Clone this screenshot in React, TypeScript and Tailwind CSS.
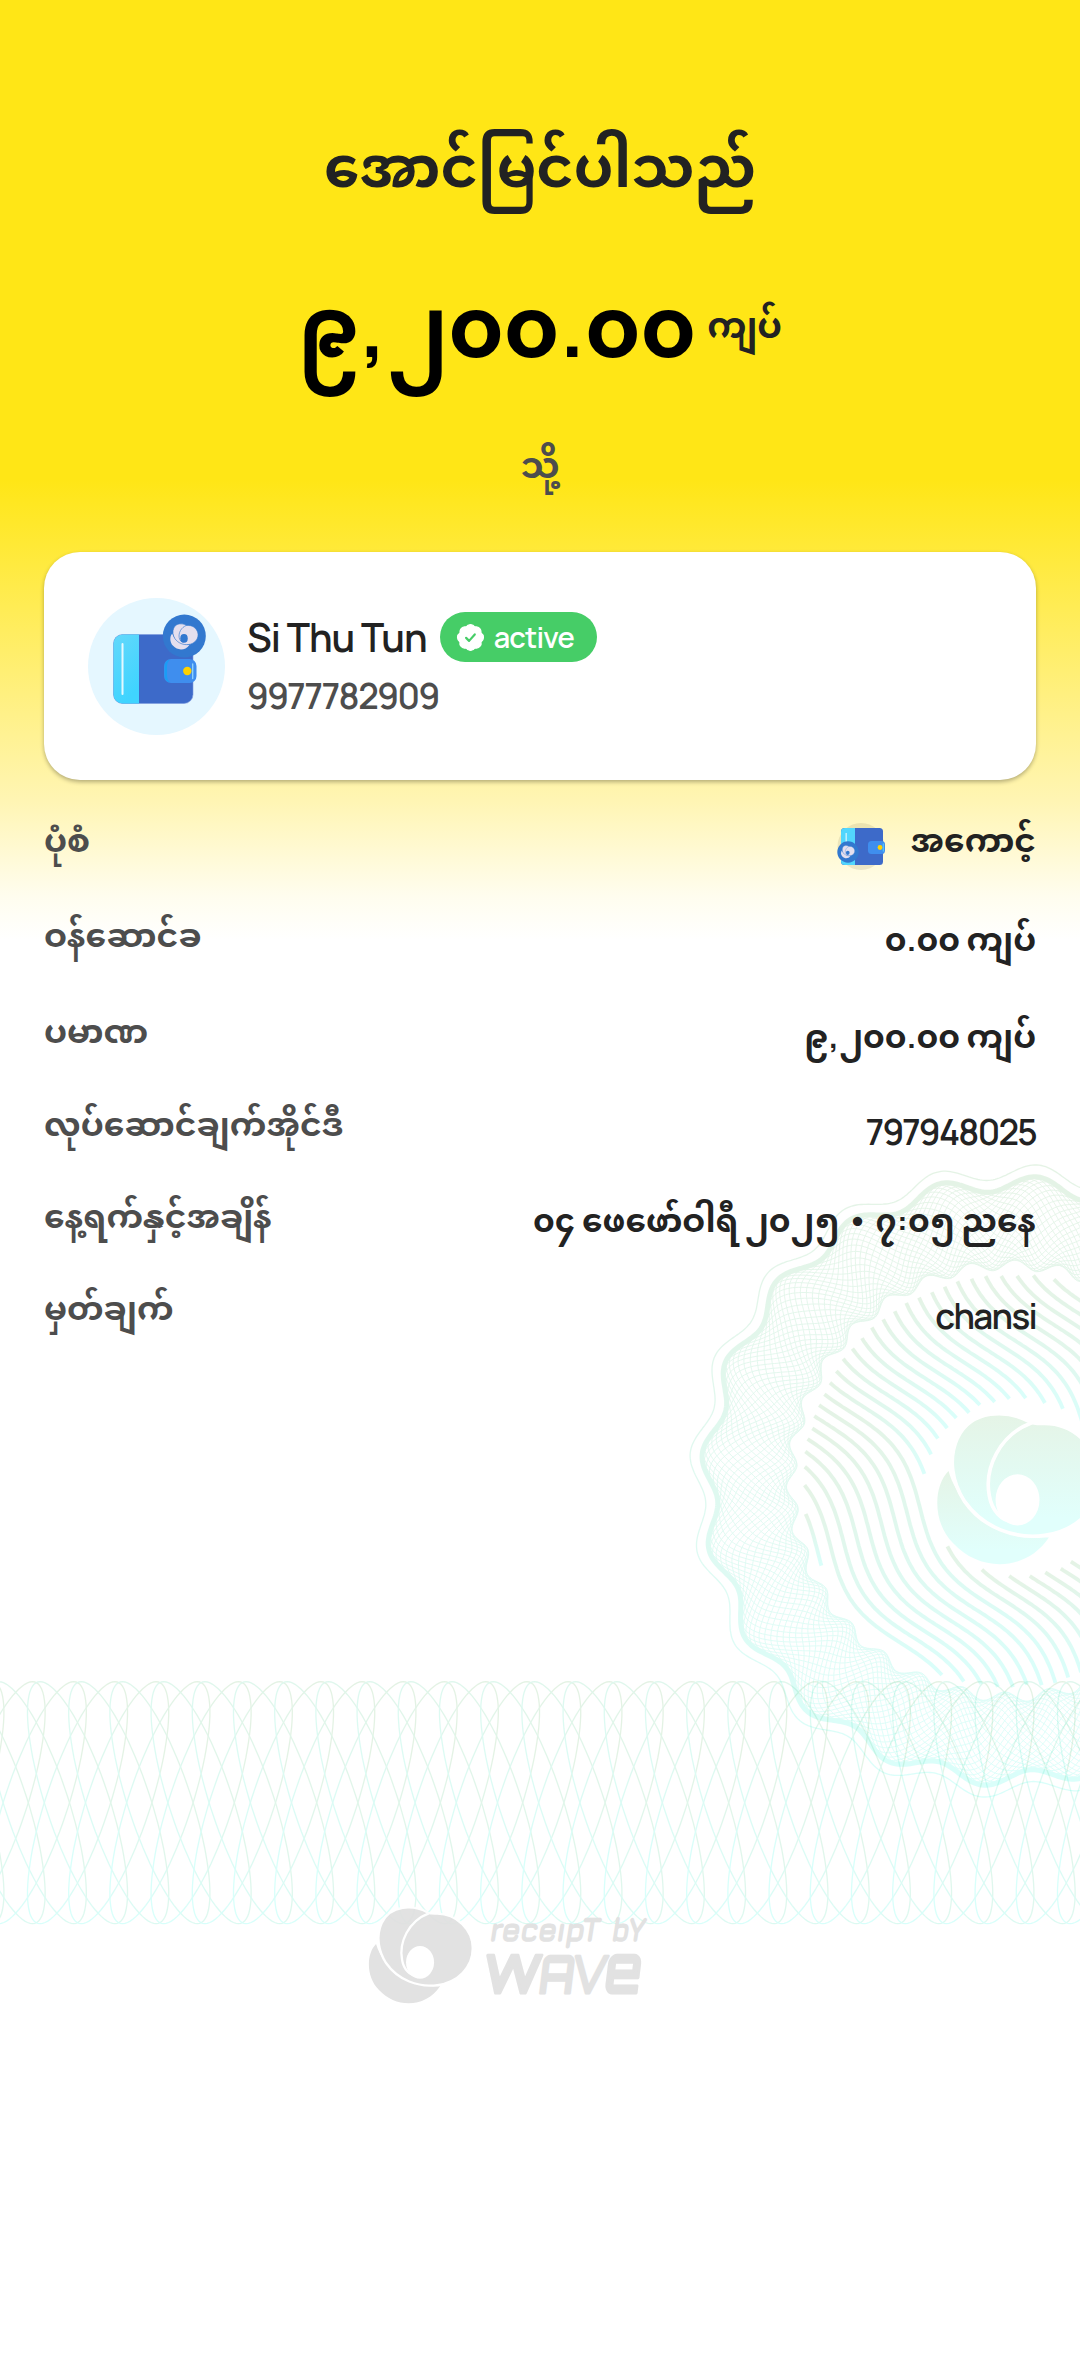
import { useId } from 'react';

type Point = [number, number];

const toPath = (points: Point[], close = false) =>
  points.map(([x, y], i) => `${i ? 'L' : 'M'}${x.toFixed(1)} ${y.toFixed(1)}`).join('') + (close ? 'Z' : '');

const rad = (deg: number) => (deg * Math.PI) / 180;

/* ---------- Guilloche rosette ---------- */

const CENTER: Point = [1010, 1481];

const polar = (radius: (a: number) => number, steps = 900) => {
  const points: Point[] = [];
  for (let i = 0; i < steps; i++) {
    const a = (i / steps) * Math.PI * 2;
    const r = radius(a);
    points.push([CENTER[0] + r * Math.sin(a), CENTER[1] - 0.988 * r * Math.cos(a)]);
  }
  return toPath(points, true);
};

const lobes = (a: number) => Math.cos(20 * (a - rad(5)));
const outerEdge = (a: number) => 301 + 8 * lobes(a);
const innerEdge = (a: number) => 218.5 + 5 * Math.cos(31 * (a - rad(1.3)));

const rosetteRim = polar((a) => 313 + 8 * lobes(a));
const rosetteBand = polar(outerEdge);
const rosetteMesh = Array.from({ length: 31 }, (_, k) =>
  polar((a) => {
    const wave = 0.5 + 0.5 * Math.sin(7 * a + (k * Math.PI * 2) / 31);
    return innerEdge(a) + (outerEdge(a) - innerEdge(a)) * wave;
  }),
);

/* ---------- Wavy stripes inside the rosette ---------- */

const stripes: string[] = [];
for (let k = -28; k <= 34; k++) {
  let run: Point[] = [];
  const flush = () => {
    if (run.length > 5) stripes.push(toPath(run));
    run = [];
  };
  for (let t = -500; t <= 700; t += 3) {
    const s = -15 * Math.sin((2 * Math.PI * t) / 239);
    const x = 837 + 12.8 * k + 0.588 * t - 0.81 * s;
    const y = 1417 - 5.4 * k + 0.81 * t + 0.588 * s;
    const inRing = Math.hypot(x - CENTER[0], y - CENTER[1]) < 207;
    const inLogo = Math.hypot((x - 1018) / 94, (y - 1488) / 88) < 1;
    if (inRing && !inLogo) run.push([x, y]);
    else flush();
  }
  flush();
}

/* ---------- Ribbon of tilted ellipses ---------- */

const ribbon: string[] = [];
for (let k = -3; k <= 28; k++) {
  for (const lean of [-1, 1]) {
    const points: Point[] = [];
    for (let i = 0; i < 90; i++) {
      const t = (i / 90) * Math.PI * 2;
      points.push([77.5 + 41.2 * k + lean * 50 * Math.cos(t - 0.726), 1802.7 - 121 * Math.cos(t)]);
    }
    ribbon.push(toPath(points, true));
  }
}

function WaveMark({ x, y, scale, fill, gap }: { x: number; y: number; scale: number; fill: string; gap: string }) {
  return (
    <g transform={`translate(${x} ${y}) scale(${scale})`}>
      <path fill={fill} d="M22 111C-8 141-8 211 31 249C81 304 170 304 214 238C130 240 45 190 22 111Z" />
      <path
        fill={fill}
        stroke={gap}
        strokeWidth="7"
        d="M178 17C134-7 66-8 39 48C21 88 29 132 52 168C88 220 150 242 206 234C266 226 312 182 312 124C312 68 262 20 206 20C196 20 186 21 178 17Z"
      />
      <path fill="none" stroke={gap} strokeWidth="7" strokeLinecap="round" d="M180 19C120 42 90 105 100 158C105 188 124 206 145 208" />
      <ellipse cx="154" cy="166" rx="42" ry="49" fill={gap} />
    </g>
  );
}

function SecurityPattern() {
  return (
    <svg className="pointer-events-none absolute inset-0 h-full w-full" viewBox="0 0 1080 2356" aria-hidden="true">
      <defs>
        <linearGradient id="rosette" gradientUnits="userSpaceOnUse" x1="0" y1="1165" x2="0" y2="1800">
          <stop stopColor="#4caf50" />
          <stop offset="1" stopColor="#00ffe5" />
        </linearGradient>
        <linearGradient id="stripe" x1="0" y1="0" x2="0" y2="1">
          <stop stopColor="#4caf50" />
          <stop offset="1" stopColor="#00ffe5" />
        </linearGradient>
        <linearGradient id="loop" x1="0" y1="1" x2="1" y2="0">
          <stop offset="0.15" stopColor="#00ffe5" />
          <stop offset="0.85" stopColor="#4caf50" />
        </linearGradient>
        <linearGradient id="mark" x1="0" y1="0" x2="0" y2="1">
          <stop stopColor="#e5f4e6" />
          <stop offset="0.85" stopColor="#e1fffc" />
        </linearGradient>
      </defs>
      <g fill="none" stroke="url(#rosette)" opacity="0.14">
        <path d={rosetteRim} strokeWidth="1.3" />
        <path d={rosetteBand} strokeWidth="5" />
        {rosetteMesh.map((d, i) => (
          <path key={i} d={d} strokeWidth="0.9" />
        ))}
      </g>
      <g fill="none" stroke="url(#stripe)" strokeWidth="3.8" opacity="0.14">
        {stripes.map((d, i) => (
          <path key={i} d={d} />
        ))}
      </g>
      <WaveMark x={937} y={1413} scale={0.523} fill="url(#mark)" gap="#ffffff" />
      <g fill="none" stroke="url(#loop)" strokeWidth="1.3" opacity="0.15">
        {ribbon.map((d, i) => (
          <path key={i} d={d} />
        ))}
      </g>
    </svg>
  );
}

function AccountAvatar() {
  const id = useId();
  return (
    <svg className="h-[137px] w-[137px] shrink-0" viewBox="88 598 137 137" aria-hidden="true">
      <defs>
        <linearGradient id={id} x1="0" y1="0" x2="0.4" y2="1">
          <stop stopColor="#63d8fb" />
          <stop offset="1" stopColor="#40d4ff" />
        </linearGradient>
      </defs>
      <circle cx="156.5" cy="666.5" r="68.5" fill="#e5f7ff" />
      <rect x="113.5" y="634.5" width="79.5" height="69" rx="9" fill="#3d6ac9" stroke="#7d9ade" strokeWidth="0.6" />
      <path d="M139 634.5H122.500a9 9 0 0 0-9 9V694.500a9 9 0 0 0 9 9H139Z" fill={`url(#${id})`} />
      <path d="M122.500 644V694" stroke="#ffffff" strokeOpacity="0.85" strokeWidth="2" strokeLinecap="round" />
      <rect x="164" y="659" width="32.500" height="24" rx="7" fill="#3f8eee" />
      <path d="M170 659.500c-4 1-5.500 4-5.500 7v9c0 3 1.500 6 5.500 7c-2-2-3-4-3-7v-9c0-3 1-5 3-7Z" fill="#1a9df5" />
      <path d="M192.700 664V678.500" stroke="#8fd6ff" strokeWidth="1.300" strokeLinecap="round" />
      <circle cx="187.300" cy="671" r="4.200" fill="#ffd200" />
      <circle cx="184.300" cy="636" r="21.500" fill="#3278cf" />
      <WaveMark x={170.3} y={623.7} scale={0.089} fill="#e4dfee" gap="#3278cf" />
    </svg>
  );
}

function AccountIcon() {
  return (
    <svg className="mt-[7px] h-[49px] w-12 shrink-0" viewBox="835 822 48 49" aria-hidden="true">
      <circle cx="859" cy="846.500" r="23.500" fill="#8a7f50" fillOpacity="0.16" />
      <rect x="839" y="828" width="42" height="37" rx="3.500" fill="#3d6ac9" />
      <path d="M853 828H843a4 4 0 0 0-4 4V861a4 4 0 0 0 4 4H853Z" fill="#52d6fd" />
      <path d="M844.200 833V846" stroke="#c8f2fd" strokeWidth="1.400" />
      <rect x="866" y="841" width="17" height="13" rx="3.500" fill="#3f8eee" />
      <path d="M881.300 843.500V851.500" stroke="#52c8fd" strokeWidth="1.200" />
      <circle cx="878" cy="847.500" r="2.400" fill="#ffd200" />
      <circle cx="846" cy="852" r="10.700" fill="#3278cf" />
      <WaveMark x={839} y={845.5} scale={0.044} fill="#e4dfee" gap="#3278cf" />
    </svg>
  );
}

function ActiveBadge() {
  return (
    <div className="-mt-[2px] flex h-[50px] w-[157px] items-center rounded-full bg-[#46cd67] pl-[15px] text-white">
      <svg className="h-[31px] w-[31px]" viewBox="0 0 24 24" aria-hidden="true">
        <path
          fill="#ffffff"
          stroke="#ffffff"
          strokeLinejoin="round"
          d="M3.850 8.620a4 4 0 0 1 4.780-4.770a4 4 0 0 1 6.740 0a4 4 0 0 1 4.780 4.780a4 4 0 0 1 0 6.740a4 4 0 0 1-4.770 4.780a4 4 0 0 1-6.750 0a4 4 0 0 1-4.780-4.770a4 4 0 0 1 0-6.760Z"
        />
        <path fill="none" stroke="#46cd67" strokeWidth="1.700" strokeLinecap="round" strokeLinejoin="round" d="M8.600 12.300l2.300 2.300l4.400-5" />
      </svg>
      <span className="ml-2 text-[29px] leading-none tracking-[-0.8px]">active</span>
    </div>
  );
}

function ReceiptBrand() {
  return (
    <svg className="mt-[529px] ml-[348px] h-[150px] w-[324px]" viewBox="348 1880 324 150" aria-label="receipt by wave">
      <g opacity="0.93">
        <WaveMark x={368.7} y={1907} scale={0.3335} fill="#e0e0e0" gap="#ffffff" />
      </g>
      <g fill="#e2e2e2" stroke="#e2e2e2" strokeLinejoin="round" strokeLinecap="round">
        <g transform="translate(488.500 1941) skewX(-9)" strokeWidth="1.600" className="font-[Jura,Manrope,sans-serif] text-[33px] font-bold">
          <text textLength="110" lengthAdjust="spacingAndGlyphs">receıpT</text>
          <text x="122" textLength="33" lengthAdjust="spacingAndGlyphs">bY</text>
        </g>
        <g transform="translate(481 1993) skewX(-7)" strokeWidth="3" className="font-[Orbitron,Manrope,sans-serif] font-medium">
          <text className="text-[65px]" textLength="58" lengthAdjust="spacingAndGlyphs">w</text>
          <text x="57" className="text-[51px]" textLength="34" lengthAdjust="spacingAndGlyphs">A</text>
          <text x="89" className="text-[51px]" textLength="35" lengthAdjust="spacingAndGlyphs">V</text>
          <text x="122" className="text-[65px]" textLength="36" lengthAdjust="spacingAndGlyphs">e</text>
        </g>
      </g>
    </svg>
  );
}

const LATIN = 'text-[35px] font-semibold tracking-[-1.7px]';
const BURMESE = 'text-[32.75px]';

const rows = [
  { label: 'ပုံစံ', value: 'အကောင့်', icon: true, row: 'h-[94.6px]', shift: '', text: BURMESE },
  { label: 'ဝန်ဆောင်ခ', value: '၀.၀၀ ကျပ်', row: 'h-[96.5px]', shift: 'mt-[4.6px]', text: BURMESE },
  { label: 'ပမာဏ', value: '၉,၂၀၀.၀၀ ကျပ်', row: 'h-[93.1px]', shift: 'mt-[4.6px]', text: BURMESE },
  { label: 'လုပ်ဆောင်ချက်အိုင်ဒီ', value: '797948025', row: 'h-[91.5px]', shift: 'mt-[7.6px]', text: LATIN },
  { label: 'နေ့ရက်နှင့်အချိန်', value: '၀၄ ဖေဖော်ဝါရီ ၂၀၂၅ • ၇:၀၅ ညနေ', row: 'h-[92.1px]', shift: 'mt-[4.3px]', text: BURMESE },
  { label: 'မှတ်ချက်', value: 'chansi', row: 'h-[68px]', shift: 'mt-[8px]', text: LATIN },
];

export default function App() {
  return (
    <div className="relative flex min-h-[2356px] w-[1080px] flex-col overflow-hidden bg-white bg-[linear-gradient(to_bottom,#ffe616_480px,#fff5b3_800px,#fffdee_895px,#ffffff_940px)] pt-[126px] font-[Manrope,'Noto_Sans_Myanmar',Inter,sans-serif] font-bold text-[#222222]">
      <SecurityPattern />
      <header className="relative flex flex-col items-center whitespace-nowrap">
        <h1 className="text-[56.7px] leading-[80px]">အောင်မြင်ပါသည်</h1>
        <div className="mt-[69px] flex h-[100px] items-center gap-[11px]">
          <span className="text-[83.7px] leading-[100px] text-black">၉,၂၀၀.၀၀</span>
          <span className="text-[35.3px] leading-[100px]">ကျပ်</span>
        </div>
        <p className="mt-[65px] text-[35px] leading-[50px] text-[#4d4d4d]">သို့</p>
      </header>

      <section className="relative mx-11 mt-[62px] flex h-[228px] shrink-0 items-center gap-[22px] rounded-[36px] bg-white pl-11 shadow-[0_2px_4px_rgba(0,0,0,0.3)]">
        <AccountAvatar />
        <div className="mt-[2px] font-semibold">
          <div className="flex h-[58px] items-center gap-[13px]">
            <span className="text-[38.5px] leading-[56px] tracking-[-1px]">Si Thu Tun</span>
            <ActiveBadge />
          </div>
          <p className="text-[35px] leading-[58px] tracking-[-1.5px] text-[#4d4d4d]">9977782909</p>
        </div>
      </section>

      <dl className="relative mx-11 mt-[35px] text-[33px] leading-[50px] whitespace-nowrap">
        {rows.map(({ label, value, icon, row, shift, text }) => (
          <div key={label} className={`flex items-start justify-between ${row}`}>
            <dt className="text-[#4d4d4d]">{label}</dt>
            <dd className={`flex gap-[26px] ${shift}`}>
              {icon && <AccountIcon />}
              <span className={text}>{value}</span>
            </dd>
          </div>
        ))}
      </dl>

      <footer className="relative">
        <ReceiptBrand />
      </footer>
    </div>
  );
}
